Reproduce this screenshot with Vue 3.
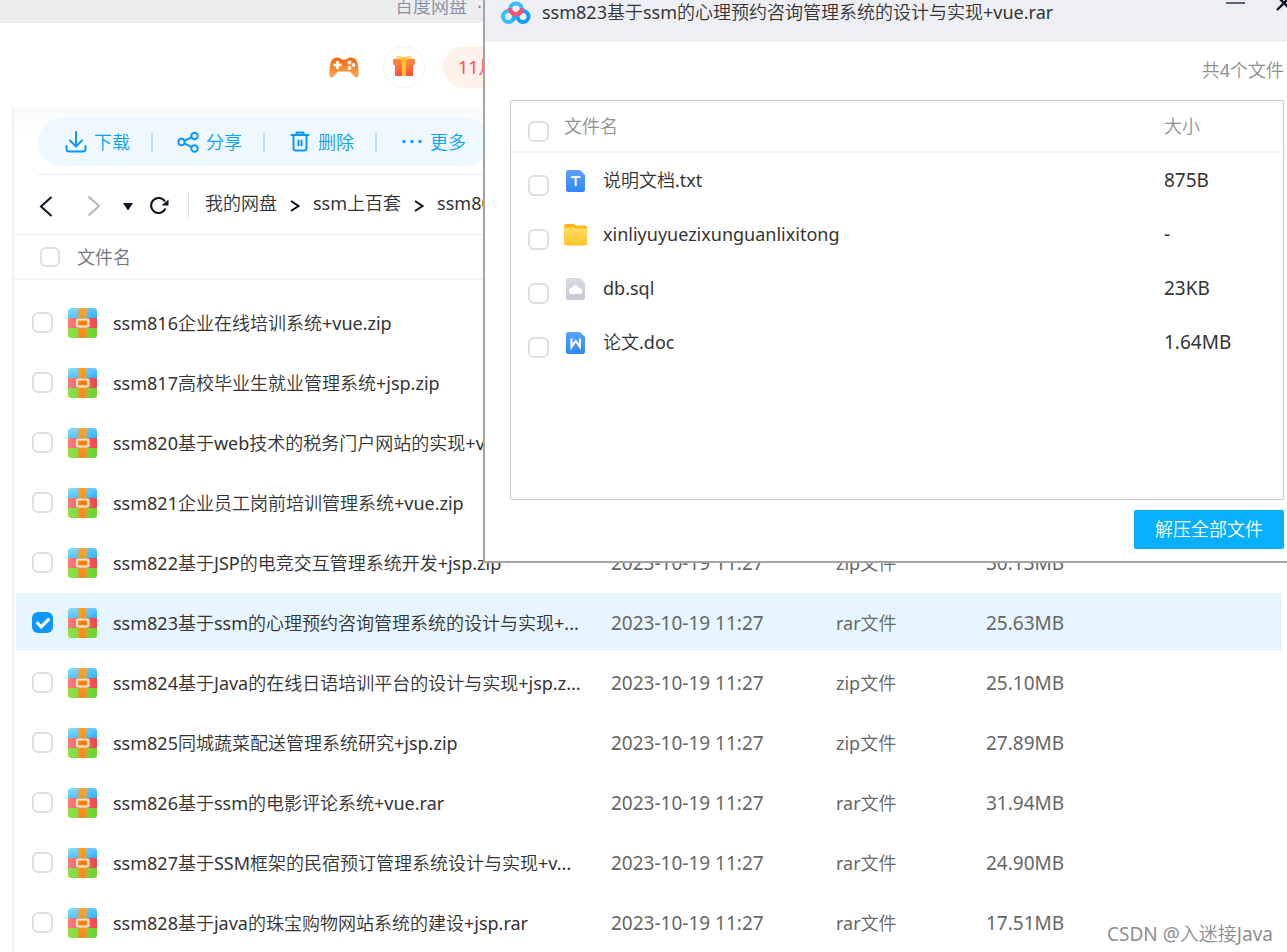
<script setup>
import { ref } from 'vue'

const files = ref([
  { name: 'ssm816企业在线培训系统+vue.zip', type: 'zip文件' },
  { name: 'ssm817高校毕业生就业管理系统+jsp.zip', type: 'zip文件' },
  { name: 'ssm820基于web技术的税务门户网站的实现+vue.zip', type: 'zip文件' },
  { name: 'ssm821企业员工岗前培训管理系统+vue.zip', type: 'zip文件' },
  { name: 'ssm822基于JSP的电竞交互管理系统开发+jsp.zip', type: 'zip文件', size: '30.13MB' },
  { name: 'ssm823基于ssm的心理预约咨询管理系统的设计与实现+...', type: 'rar文件', size: '25.63MB', checked: true },
  { name: 'ssm824基于Java的在线日语培训平台的设计与实现+jsp.z...', type: 'zip文件', size: '25.10MB' },
  { name: 'ssm825同城蔬菜配送管理系统研究+jsp.zip', type: 'zip文件', size: '27.89MB' },
  { name: 'ssm826基于ssm的电影评论系统+vue.rar', type: 'rar文件', size: '31.94MB' },
  { name: 'ssm827基于SSM框架的民宿预订管理系统设计与实现+v...', type: 'rar文件', size: '24.90MB' },
  { name: 'ssm828基于java的珠宝购物网站系统的建设+jsp.rar', type: 'rar文件', size: '17.51MB' },
])

const entries = ref([
  { name: '说明文档.txt', icon: 'txt', size: '875B' },
  { name: 'xinliyuyuezixunguanlixitong', icon: 'folder', size: '-' },
  { name: 'db.sql', icon: 'sql', size: '23KB' },
  { name: '论文.doc', icon: 'doc', size: '1.64MB' },
])
</script>

<template>
  <div class="app">
    <svg class="defs" width="0" height="0" aria-hidden="true">
      <defs>
        <linearGradient id="zBlue" x1="0" y1="0" x2="1" y2="1"><stop offset="0" stop-color="#8adcff" /><stop offset="1" stop-color="#2fb2f5" /></linearGradient>
        <linearGradient id="zRed"><stop offset="0" stop-color="#ff7c7c" /><stop offset="1" stop-color="#f04646" /></linearGradient>
        <linearGradient id="zGreen"><stop offset="0" stop-color="#8fe04a" /><stop offset="1" stop-color="#6fd02a" /></linearGradient>
        <linearGradient id="zBelt" x1="0" y1="0" x2="0" y2="1"><stop offset="0" stop-color="#ffa425" /><stop offset="1" stop-color="#ff8523" /></linearGradient>
        <linearGradient id="docBlue" x1="0" y1="0" x2="0" y2="1"><stop offset="0" stop-color="#5aa2ff" /><stop offset="1" stop-color="#2f86fa" /></linearGradient>
        <linearGradient id="docGrey" x1="0" y1="0" x2="0" y2="1"><stop offset="0" stop-color="#d6dae0" /><stop offset="1" stop-color="#c6cad3" /></linearGradient>
        <linearGradient id="folderFront" x1="0" y1="0" x2="0" y2="1"><stop offset="0" stop-color="#ffdc5e" /><stop offset="1" stop-color="#ffc42e" /></linearGradient>
        <linearGradient id="padFill" x1="0" y1="0" x2="0" y2="1"><stop offset="0" stop-color="#ee6a0c" /><stop offset="1" stop-color="#fda757" /></linearGradient>
        <linearGradient id="giftFill" x1="0" y1="0" x2="0" y2="1"><stop offset="0" stop-color="#ff7f3e" /><stop offset="1" stop-color="#ff4b3c" /></linearGradient>
      </defs>
    </svg>

    <header class="titlebar"><span>百度网盘</span><span>·</span></header>

    <div class="promo">
      <button class="plain" aria-label="游戏">
        <svg width="30" height="24" viewBox="0 0 30 24">
          <path d="M8 2.500Q10 2 11.500 3.500L13 4.500h4l1.500-1Q20 2 22 2.500C26 3 28 5 28.700 9C29.600 14 30 19 29 21.500C28 23.500 26 22.500 24.500 20.500L21 16.500H9L5.500 20.500C4 22.500 2 23.500 1 21.500C0 19 .4 14 1.300 9C2 5 4 3 8 2.500Z" fill="url(#padFill)" />
          <path d="M8.500 6v8M4.500 10h8" stroke="#fff" stroke-width="2.600" />
          <circle cx="20.500" cy="7.500" r="1.900" fill="#fff" /><circle cx="24.500" cy="10" r="1.900" fill="#fff" /><circle cx="20.500" cy="13" r="1.900" fill="#fff" />
        </svg>
      </button>
      <button class="plain ring" aria-label="礼物">
        <svg width="22" height="22" viewBox="0 0 22 22">
          <rect x="2" y="8" width="18" height="12" rx="1" fill="url(#giftFill)" />
          <rect x="0" y="3" width="22" height="6" rx="1" fill="#ff8240" />
          <path d="M11 3C8 0 4 0 4 1.500S8 3 11 3ZM11 3C14 0 18 0 18 1.500S14 3 11 3Z" fill="#fff5d5" stroke="#ffcf5a" stroke-width="1.500" />
          <rect x="9" y="1" width="4" height="19" fill="#ffc52e" />
        </svg>
      </button>
      <button class="plain sale">11月</button>
    </div>

    <main class="main">
      <div class="toolbar">
        <button class="plain tool">
          <svg width="22" height="22" viewBox="0 0 22 22"><path d="M11 1v14M5 9.500l6 6 6-6M1.500 15v3q0 2.500 2.500 2.500h14q2.500 0 2.500-2.500v-3" /></svg>下载
        </button>
        <button class="plain tool">
          <svg width="22" height="22" viewBox="0 0 22 22"><circle cx="4.500" cy="11" r="3.200" /><circle cx="17.500" cy="5" r="3.200" /><circle cx="17.500" cy="17.500" r="3.200" /><path d="M7.500 9.700L14.500 6.500M7.500 12.300l7 3.700" /></svg>分享
        </button>
        <button class="plain tool">
          <svg width="22" height="22" viewBox="0 0 22 22"><path d="M2.500 4h17M7.500 3.500V1.500h7V3.500M4.500 4.500v12.500q0 2.500 2.500 2.500h8q2.500 0 2.500-2.500V4.500M9.500 9.500v5M12.500 9.500v5" /></svg>删除
        </button>
        <button class="plain tool">
          <svg width="22" height="22" viewBox="0 0 22 22" class="dots"><circle cx="3" cy="10.500" r="1.700" /><circle cx="11" cy="10.500" r="1.700" /><circle cx="19" cy="10.500" r="1.700" /></svg>更多
        </button>
      </div>

      <nav class="nav">
        <button class="plain" aria-label="后退"><svg width="14" height="24" viewBox="0 0 14 24" class="line"><path d="M12.500 3L2 12.500 12.500 22" /></svg></button>
        <button class="plain" aria-label="前进"><svg width="14" height="24" viewBox="0 0 14 24" class="line faint"><path d="M1.500 2.500L12 12 1.500 21.500" /></svg></button>
        <button class="plain" aria-label="历史"><svg width="10" height="24" viewBox="0 0 10 24"><path d="M0 9h10L5 16.500z" fill="#0b1220" /></svg></button>
        <button class="plain" aria-label="刷新"><svg width="20" height="24" viewBox="0 0 20 24" class="line"><path d="M16.500 14.500A7.500 7.500 0 1 1 16 7.500" /><path d="M19.500 5.500v6h-7z" fill="#0b1220" stroke="none" /></svg></button>
        <span class="rule"></span>
        <a href="#">我的网盘</a>
        <svg width="10" height="14" viewBox="0 0 10 14" class="line sep"><path d="M1 2l7.500 5L1 12" /></svg>
        <a href="#">ssm上百套</a>
        <svg width="10" height="14" viewBox="0 0 10 14" class="line sep"><path d="M1 2l7.500 5L1 12" /></svg>
        <a href="#">ssm800</a>
      </nav>

      <table class="list">
        <thead>
          <tr>
            <th><input id="all" type="checkbox" class="check small" /></th>
            <th><label for="all">文件名</label></th>
          </tr>
        </thead>
        <tbody>
          <tr v-for="(f, i) in files" :key="f.name" :class="{ on: f.checked }">
            <td><input :id="'f' + i" v-model="f.checked" type="checkbox" class="check" /></td>
            <td>
              <svg class="zip" width="30" height="30" viewBox="0 0 30 30">
                <path d="M0 10V3Q0 0 3 0H26Q29 0 29 3V10Z" fill="url(#zBlue)" />
                <path d="M0 10H29V20H0Z" fill="url(#zRed)" />
                <path d="M0 20H29V27Q29 30 26 30H3Q0 30 0 27Z" fill="url(#zGreen)" />
                <rect x="10.500" width="8" height="30" fill="url(#zBelt)" />
                <rect x="9" y="11.500" width="11.500" height="7" rx="1" fill="#ff8a1c" stroke="#ffe9d0" stroke-width="2.200" />
                <rect x="11" y="13.500" width="7.500" height="3" fill="#ff7a00" />
              </svg>
            </td>
            <td><label :for="'f' + i">{{ f.name }}</label></td>
            <td class="num">2023-10-19 11:27</td>
            <td class="dim">{{ f.type }}</td>
            <td class="num">{{ f.size }}</td>
          </tr>
        </tbody>
      </table>
    </main>

    <section class="dialog" role="dialog" aria-labelledby="dlg-title">
      <header class="dlg-head">
        <svg width="30" height="24" viewBox="0 0 30 24" fill="none" stroke-width="4">
          <circle cx="7.500" cy="16.500" r="5.500" stroke="#2ec0ff" />
          <circle cx="22" cy="16.500" r="5.500" stroke="#0d9dff" />
          <path d="M11 20.500L19 12.500" stroke="#22b0ff" />
          <path d="M9 9.500a6 6 0 0 1 12 0" stroke="#35bfff" />
          <path d="M9 8a6 6.500 0 0 0 12 0" stroke="#f9506f" stroke-width="4.500" />
        </svg>
        <h1 id="dlg-title">ssm823基于ssm的心理预约咨询管理系统的设计与实现+vue.rar</h1>
        <button class="plain" aria-label="最小化"><svg width="20" height="20" viewBox="0 0 20 20"><path d="M0 11h19" stroke="#5a6270" stroke-width="2" /></svg></button>
        <button class="plain close" aria-label="关闭"><svg width="16" height="20" viewBox="0 0 16 20"><path d="M1 4l14 14M15 4L1 18" stroke="#0b1220" stroke-width="2.400" /></svg></button>
      </header>
      <div class="dlg-body">
        <p class="count">共4个文件</p>
        <div class="box">
          <table class="entries">
            <thead>
              <tr>
                <th><input id="dall" type="checkbox" class="check" /></th>
                <th class="wide"><label for="dall">文件名</label></th>
                <th>大小</th>
              </tr>
            </thead>
            <tbody>
              <tr v-for="(e, i) in entries" :key="e.name">
                <td><input :id="'e' + i" type="checkbox" class="check" /></td>
                <td>
                  <svg v-if="e.icon === 'folder'" width="25" height="26" viewBox="1 -2 25 26">
                    <path d="M1 3Q1 1 3 1H10Q12 1 13 2.500H22Q24 2.500 24 5V12H1Z" fill="#fdb51e" />
                    <path d="M1 6Q1 4.500 3 4.500H11L13 5.500H22Q24 5.500 24 7.500V20.500Q24 22.500 22 22.500H3Q1 22.500 1 20.500Z" fill="url(#folderFront)" />
                  </svg>
                  <svg v-else width="25" height="26" viewBox="1 -2 25 26">
                    <path d="M3 3Q3 1 5 1H17L22 6V21Q22 23 20 23H5Q3 23 3 21Z" :fill="e.icon === 'sql' ? 'url(#docGrey)' : 'url(#docBlue)'" />
                    <path v-if="e.icon === 'txt'" d="M8 8h9.500M12.700 8v9" class="glyph" />
                    <path v-if="e.icon === 'doc'" d="M8.500 7.500v8.500l4.200-6 4.200 6V7.500" class="glyph" />
                    <path v-if="e.icon === 'sql'" d="M9 17a3 3 0 0 1-.3-6 4 4 0 0 1 7.600 0A3 3 0 0 1 16 17Z" fill="#fff" />
                  </svg>
                </td>
                <td><label :for="'e' + i">{{ e.name }}</label></td>
                <td class="num">{{ e.size }}</td>
              </tr>
            </tbody>
          </table>
        </div>
        <button class="plain extract">解压全部文件</button>
      </div>
    </section>

    <span class="credit">CSDN @入迷接Java</span>
  </div>
</template>

<style>
body {
  margin: 0;
  overflow: hidden;
}
</style>

<style scoped>
.app {
  position: relative;
  display: flex;
  flex-direction: column;
  min-height: 100vh;
  overflow: hidden;
  background: #fff;
  color: #333;
  font-family: "Noto Sans", "Noto Sans CJK SC DemiLight", "Noto Sans CJK SC Light", "Noto Sans CJK SC", sans-serif;
  font-size: 18px;
  font-weight: 400;
  line-height: 24px;
}
* {
  box-sizing: border-box;
}
.defs {
  position: absolute;
}
.plain {
  padding: 0;
  border: 0;
  background: none;
  color: inherit;
  font: inherit;
  cursor: pointer;
}
svg {
  display: block;
  flex: none;
}
.titlebar {
  display: flex;
  gap: 10px;
  height: 23px;
  padding-left: 395px;
  background: #ecedef;
  color: #858d9f;
  line-height: 13px;
}
.promo {
  display: flex;
  align-items: center;
  gap: 18px;
  height: 84px;
  padding: 3px 0 0 329px;
}
.promo .ring {
  display: grid;
  place-items: center;
  width: 42px;
  height: 42px;
  margin-left: 6px;
  border: 1px solid #f2f2f2;
  border-radius: 50%;
}
.promo .sale {
  height: 42px;
  padding: 0 15px;
  border-radius: 21px;
  background: #fff2ea;
  color: #ff4a5c;
}
.main {
  margin-left: 12px;
  border-left: 2px solid #f0f1f2;
  background: linear-gradient(#f8fafb, #fff 28px);
}
.toolbar {
  display: flex;
  width: 452px;
  height: 48px;
  margin: 11px 0 8px 24px;
  padding-left: 27px;
  align-items: center;
  border-radius: 24px;
  background: #f0f8ff;
}
.tool {
  display: flex;
  flex: none;
  align-items: center;
  width: 112px;
  gap: 7px;
  color: #06a0ff;
}
.tool:not(:last-child)::after {
  content: "";
  width: 2px;
  height: 19px;
  margin-left: 14px;
  background: #b5e2fd;
}
.tool svg {
  fill: none;
  stroke: #0a98ff;
  stroke-width: 2;
  stroke-linecap: round;
  stroke-linejoin: round;
}
.tool .dots {
  fill: #0a98ff;
  stroke: none;
}
.nav {
  display: flex;
  align-items: center;
  height: 60px;
  margin-left: 24px;
  padding: 0 0 3px 1px;
  border-top: 1px solid #ececee;
}
.nav button {
  padding-top: 5px;
  margin-right: 34px;
}
.nav button:nth-child(2) {
  margin-right: 22px;
}
.nav button:nth-child(3) {
  margin-right: 16px;
}
.nav button:nth-child(4) {
  margin-right: 19px;
}
.line {
  fill: none;
  stroke: #0b1220;
  stroke-width: 2;
}
.faint {
  stroke: #b4b4b4;
}
.rule {
  width: 1px;
  height: 26px;
  margin: 4px 16px 0 0;
  background: #e4e5e7;
}
.nav a {
  color: #333;
  text-decoration: none;
}
.sep {
  margin: 5px 13px 0;
}
table,
thead,
tbody {
  display: block;
}
tr {
  display: grid;
  align-items: center;
}
th,
td {
  padding: 0;
  text-align: left;
  font-weight: 400;
  white-space: nowrap;
}
.check {
  display: block;
  width: 21px;
  height: 21px;
  margin: 0;
  appearance: none;
  border: 2px solid #dedede;
  border-radius: 6px;
  background: #fff;
}
.small {
  width: 20px;
  height: 20px;
}
.check:checked {
  border: 0;
  background: #0a98ff;
}
.check:checked::after {
  content: "";
  display: block;
  width: 5px;
  height: 10px;
  margin: 3px 0 0 7px;
  border: solid #fff;
  border-width: 0 3px 3px 0;
  transform: rotate(45deg);
}
.list thead tr {
  grid-template-columns: 37px 1fr;
  height: 46px;
  padding-left: 26px;
  border-top: 1px solid #ececee;
  border-bottom: 2px solid #f3f3f4;
}
.list th {
  color: #70757f;
}
.list tbody {
  padding: 13px 5px 0 2px;
}
.list tbody tr {
  grid-template-columns: 36px 45px 498px 225px 150px 1fr;
  height: 58px;
  margin-bottom: 2px;
  padding-left: 16px;
}
.list td + td {
  padding-top: 2px;
}
.list .on {
  background: #e7f5ff;
}
.num {
  font-size: 19px;
}
.list .num,
.dim {
  color: #666;
}
.dialog {
  position: absolute;
  top: 0;
  right: 0;
  left: 483px;
  height: 563px;
  border: solid #a4a4a4;
  border-width: 0 0 2px 2px;
  background: #fff;
}
.dlg-head {
  display: flex;
  height: 42px;
  padding-left: 16px;
  border-bottom: 1px solid #f3f4f8;
  background: #eeeff5;
}
.dlg-head h1 {
  flex: 1;
  margin: 0 0 0 11px;
  font-size: 18px;
  font-weight: 400;
  line-height: 25px;
  white-space: nowrap;
}
.dlg-head button {
  height: 12px;
  display: flex;
  align-items: flex-end;
}
.dlg-head .close {
  margin: 0 -5px 0 30px;
}
.dlg-body {
  display: flex;
  flex-direction: column;
  align-items: stretch;
  padding: 16px 3px 0 25px;
}
.count {
  margin: 0 0 18px;
  color: #909090;
  text-align: right;
}
.box {
  height: 400px;
  border: 1px solid #c8c8c8;
  border-radius: 2px;
}
.entries tr {
  grid-template-columns: 36px 39px 1fr 119px;
  height: 54px;
  padding-left: 17px;
}
.entries thead tr {
  height: 52px;
  border-bottom: 2px solid #f3f3f3;
}
.entries th {
  color: #909090;
}
.entries .wide {
  grid-column: span 2;
}
.entries .check {
  margin-top: 10px;
}
.glyph {
  fill: none;
  stroke: #fff;
  stroke-width: 2;
}
.extract {
  align-self: flex-end;
  width: 150px;
  height: 39px;
  margin-top: 10px;
  padding-bottom: 2px;
  border-radius: 2px;
  background: #06b0ff;
  color: #fff;
}
.credit {
  position: absolute;
  right: 14px;
  bottom: 7px;
  color: #8e8e8e;
  font-size: 19px;
}
</style>
